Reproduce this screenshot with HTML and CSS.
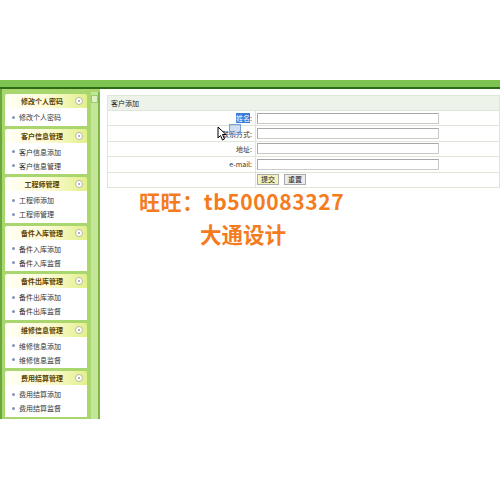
FILE: index.html
```html
<!DOCTYPE html>
<html lang="zh-CN">
<head>
  <meta charset="UTF-8">
  <title>客户添加</title>
  <link rel="stylesheet" href="styles.css">
</head>
<body>
  <div class="top"></div>
  <div class="topbar"></div>
  <div class="wrap">
    <div class="sidebar">
      <div class="menus">
        <div class="menu">
          <div class="menu-head">修改个人密码<span class="toggle"></span></div>
          <ul class="menu-body">
            <li>修改个人密码</li>
          </ul>
        </div>
        <div class="menu">
          <div class="menu-head">客户信息管理<span class="toggle"></span></div>
          <ul class="menu-body">
            <li>客户信息添加</li>
            <li>客户信息管理</li>
          </ul>
        </div>
        <div class="menu">
          <div class="menu-head">工程师管理<span class="toggle"></span></div>
          <ul class="menu-body">
            <li>工程师添加</li>
            <li>工程师管理</li>
          </ul>
        </div>
        <div class="menu">
          <div class="menu-head">备件入库管理<span class="toggle"></span></div>
          <ul class="menu-body">
            <li>备件入库添加</li>
            <li>备件入库监督</li>
          </ul>
        </div>
        <div class="menu">
          <div class="menu-head">备件出库管理<span class="toggle"></span></div>
          <ul class="menu-body">
            <li>备件出库添加</li>
            <li>备件出库监督</li>
          </ul>
        </div>
        <div class="menu">
          <div class="menu-head">维修信息管理<span class="toggle"></span></div>
          <ul class="menu-body">
            <li>维修信息添加</li>
            <li>维修信息监督</li>
          </ul>
        </div>
        <div class="menu">
          <div class="menu-head">费用结算管理<span class="toggle"></span></div>
          <ul class="menu-body">
            <li>费用结算添加</li>
            <li>费用结算监督</li>
          </ul>
        </div>
      </div>
      <div class="scroll"><div class="scroll-btn"></div></div>
    </div>

    <div class="main">
      <table class="form-table">
        <tr><td class="title" colspan="2">客户添加</td></tr>
        <tr>
          <td class="label"><span class="selected">姓名</span>:</td>
          <td><input type="text" class="field"></td>
        </tr>
        <tr>
          <td class="label">联系方式:</td>
          <td><input type="text" class="field"></td>
        </tr>
        <tr>
          <td class="label">地址:</td>
          <td><input type="text" class="field"></td>
        </tr>
        <tr>
          <td class="label">e-mail:</td>
          <td><input type="text" class="field"></td>
        </tr>
        <tr>
          <td></td>
          <td><button class="btn btn-submit">提交</button><button class="btn">重置</button></td>
        </tr>
      </table>

      <div class="drag-box"></div>
      <svg class="cursor" width="11" height="15" viewBox="0 0 11 15">
        <path d="M1 1 L1 12 L3.5 9.5 L5.5 14 L7.5 13 L5.5 8.5 L9 8.5 Z" fill="#fff" stroke="#000" stroke-width="1"/>
      </svg>
    </div>
  </div>

  <div class="watermark">
    <div class="wm-line1">旺旺：tb500083327</div>
    <div class="wm-line2">大通设计</div>
  </div>
</body>
</html>
```

FILE: styles.css
```css
body {
  margin: 0;
  font-family: "Noto Sans CJK SC", "DejaVu Sans", sans-serif;
  font-size: 7px;
  color: #333;
  background: #fff;
}
.top {
  height: 80px;
}
.topbar {
  height: 7px;
  background: #7cc352;
  border-bottom: 2px solid #2f6b16;
}
.wrap {
  display: flex;
  align-items: flex-start;
}
.sidebar {
  display: flex;
  width: 95px;
  padding: 5px 0 2px 3px;
  background: #a9d66e;
  border-left: 2px solid #6aa83c;
}
.menus {
  width: 82px;
  display: flex;
  flex-direction: column;
  gap: 3px;
}
.menu-head {
  position: relative;
  height: 14px;
  line-height: 14px;
  text-align: center;
  padding-right: 8px;
  color: #5a4300;
  font-weight: bold;
  background: linear-gradient(to right, #fffff4, #fdfbd8 50%, #e2f08a);
  border-radius: 2px 2px 0 0;
}
.toggle {
  position: absolute;
  right: 4px;
  top: 3px;
  width: 6px;
  height: 6px;
  border: 1px solid #b8b8a8;
  border-radius: 50%;
  background: #fff;
}
.toggle::after {
  content: "";
  position: absolute;
  left: 2px;
  top: 2px;
  width: 2px;
  height: 2px;
  background: #9a9a9a;
  border-radius: 50%;
}
.menu-body {
  list-style: none;
  margin: 0;
  padding: 2px 0 1.5px;
  background: #fff;
}
.menu-body li {
  display: flex;
  align-items: center;
  height: 14px;
  padding-left: 7px;
  color: #333;
}
.menu-body li::before {
  content: "";
  width: 3px;
  height: 3px;
  margin-right: 4px;
  border-radius: 50%;
  background: #8293bb;
}
.scroll {
  width: 7px;
  margin-left: 4px;
  align-self: stretch;
  margin-top: -2px;
  margin-bottom: -2px;
  background: #c3e698;
  border-right: 2px solid #7db64a;
}
.scroll-btn {
  height: 6px;
  margin: 3px 0 0;
  background: #dff2c6;
  border: 1px solid #9ccc70;
}
.main {
  position: relative;
  flex: 1;
  padding: 6px 0 0 7px;
}
.form-table {
  width: 100%;
  border-collapse: collapse;
}
.form-table td {
  height: 14.4px;
  padding: 0;
  border: 1px solid #dde6d8;
}
.form-table .title {
  height: 14px;
  padding-left: 3px;
  background: #eef3ea;
  color: #222;
}
.form-table .label {
  width: 144px;
  text-align: right;
  padding-right: 3px;
  color: #333;
}
.selected {
  background: #3b7bd8;
  color: #fff;
}
.field {
  display: block;
  width: 182px;
  height: 11px;
  margin: 0 0 0 1px;
  padding: 0;
  box-sizing: border-box;
  border: 1px solid #c9c9c9;
  border-top-color: #a8a8a8;
  border-left-color: #a8a8a8;
}
.btn {
  height: 11px;
  margin: 0 4px 0 1px;
  padding: 0 3px;
  font-family: inherit;
  font-size: 7px;
  line-height: 9px;
  color: #222;
  background: #ececec;
  border: 1px solid #aaa;
}
.btn-submit {
  background: #f6f3bc;
}
.drag-box {
  position: absolute;
  left: 129px;
  top: 35px;
  width: 10px;
  height: 9px;
  border: 1px solid #7aa0d8;
  background: rgba(120, 160, 220, 0.35);
}
.cursor {
  position: absolute;
  left: 117px;
  top: 37px;
}
.watermark {
  position: absolute;
  left: 0;
  top: 0;
  color: #f47b1e;
  font-weight: bold;
  pointer-events: none;
}
.wm-line1 {
  position: absolute;
  left: 139px;
  top: 186px;
  font-size: 21px;
  letter-spacing: 0.6px;
  white-space: nowrap;
}
.wm-line2 {
  position: absolute;
  left: 200px;
  top: 218px;
  font-size: 21.5px;
  white-space: nowrap;
}
```
